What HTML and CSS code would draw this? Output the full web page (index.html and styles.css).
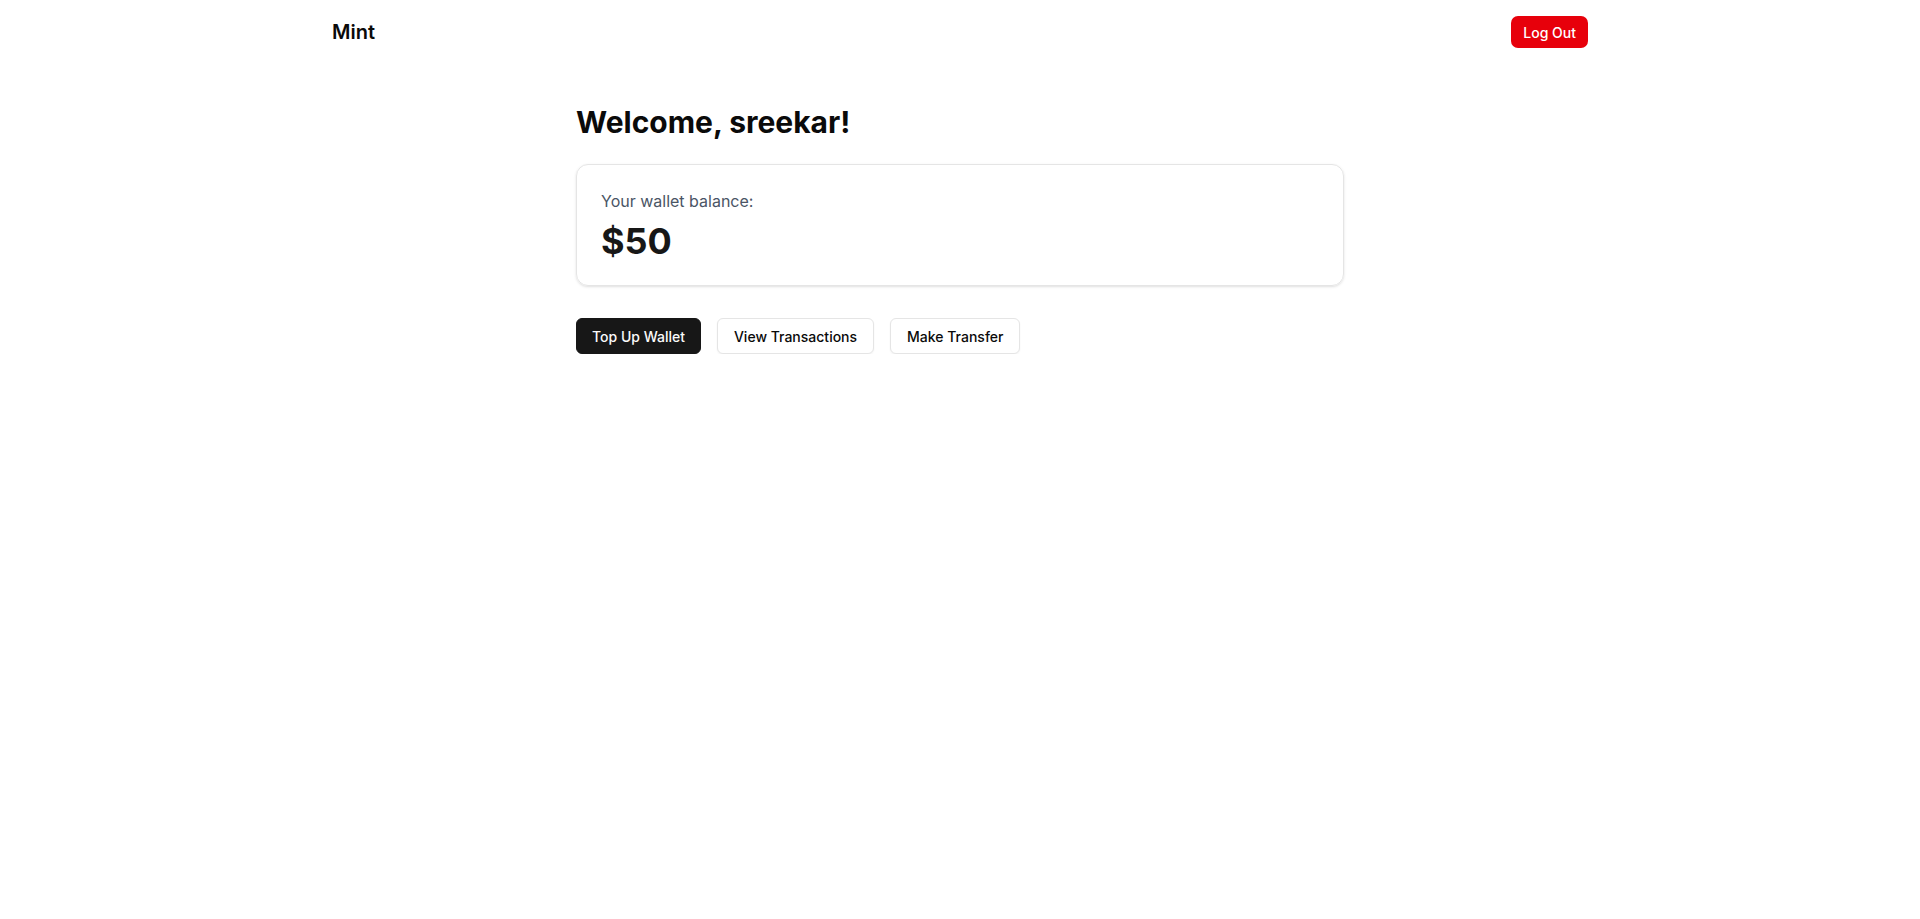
FILE: index.html
```html
<!DOCTYPE html>
<html lang="en">
<head>
<meta charset="utf-8">
<title>Mint</title>
<link rel="stylesheet" href="styles.css">
</head>
<body>
<header class="topbar">
  <div class="topbar-inner">
    <div class="brand">Mint</div>
    <button class="btn btn-danger">Log Out</button>
  </div>
</header>
<main class="main">
  <h1 class="welcome">Welcome, sreekar!</h1>
  <section class="card">
    <p class="card-label">Your wallet balance:</p>
    <p class="card-amount">$50</p>
  </section>
  <div class="actions">
    <button class="btn btn-primary">Top Up Wallet</button>
    <button class="btn btn-outline">View Transactions</button>
    <button class="btn btn-outline">Make Transfer</button>
  </div>
</main>
</body>
</html>
```
FILE: styles.css
```css
* { box-sizing: border-box; }
html, body { margin: 0; padding: 0; background: #fff; }
body {
  font-family: Inter, "Noto Sans", sans-serif;
  color: #0a0a0a;
}
.topbar-inner {
  max-width: 1280px;
  margin: 0 auto;
  padding: 16px 12px;
  display: flex;
  align-items: center;
  justify-content: space-between;
}
.brand {
  font-size: 20px;
  line-height: 28px;
  font-weight: 600;
}
.btn {
  font-family: inherit;
  font-size: 14px;
  line-height: 20px;
  font-weight: 500;
  border-radius: 6px;
  cursor: pointer;
  display: inline-flex;
  align-items: center;
  justify-content: center;
  white-space: nowrap;
}
.btn-danger {
  height: 32px;
  padding: 1px 12px 0;
  background: #e7000b;
  color: #fff;
  border: none;
  border-radius: 7px;
}
.main {
  max-width: 768px;
  margin: 0 auto;
  padding-top: 40px;
}
.welcome {
  margin: 0 0 24px;
  font-size: 30px;
  line-height: 36px;
  font-weight: 700;
}
.card {
  border: 1px solid #e5e5e5;
  border-radius: 12px;
  padding: 24px;
  box-shadow: 0 1px 3px rgba(0,0,0,0.1), 0 1px 2px -1px rgba(0,0,0,0.1);
}
.card-label {
  margin: 0;
  font-size: 16px;
  line-height: 24px;
  color: #4a5565;
}
.card-amount {
  margin: 8px 0 0;
  font-size: 36px;
  line-height: 40px;
  font-weight: 700;
  color: #171717;
}
.actions {
  margin-top: 32px;
  display: flex;
  gap: 16px;
}
.actions .btn {
  height: 36px;
  padding: 1px 16px 0;
}
.actions .btn-primary {
  padding: 1px 15px 0;
}
.btn-primary {
  background: #171717;
  color: #fafafa;
  border: 1px solid #171717;
}
.btn-outline {
  background: #fff;
  color: #0a0a0a;
  border: 1px solid #e5e5e5;
  box-shadow: 0 1px 2px rgba(0,0,0,0.05);
}
```
